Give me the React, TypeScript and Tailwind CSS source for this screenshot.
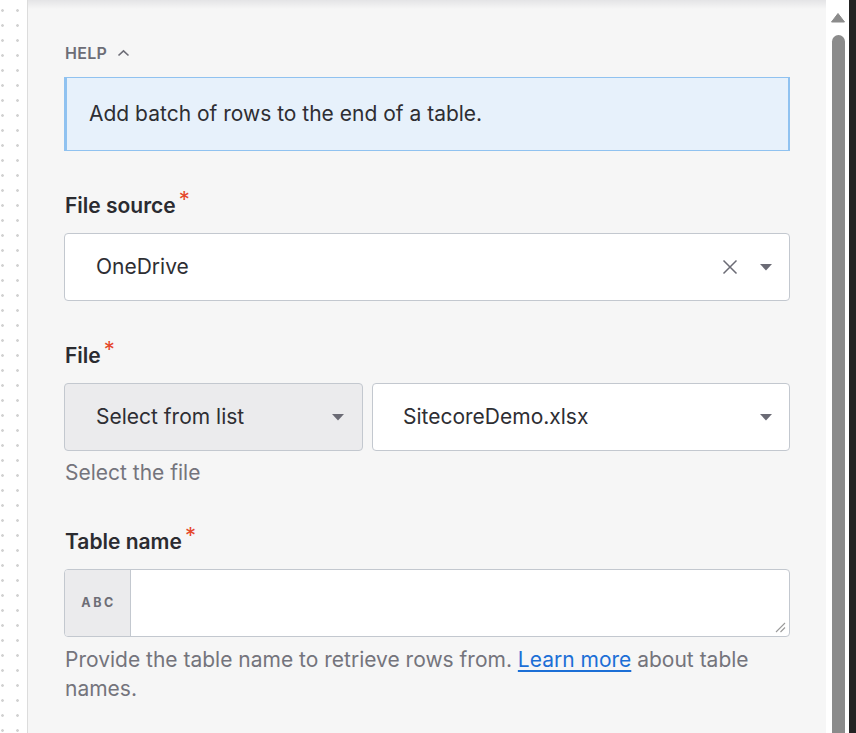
const Caret = ({ className = "" }: { className?: string }) => (
  <svg width="12" height="7" viewBox="0 0 12 7" className={className}>
    <path d="M0 0 L12 0 L6 6.5 Z" fill="#6b6b75" />
  </svg>
);

const Required = () => <span className="text-[#e5472b] text-[22px] leading-none relative -top-[6px] ml-[3px] font-normal">*</span>;

const Label = ({ text }: { text: string }) => (
  <div className="text-[21px] font-semibold text-[#2b2b30] leading-[24px] flex items-start">
    {text}
    <Required />
  </div>
);

const App = () => {
  return (
    <div className="w-[856px] h-[733px] flex overflow-hidden bg-white" style={{ fontFamily: "Inter, 'Noto Sans', sans-serif" }}>
      <div className="w-[28px] h-full border-r border-[#dcdcdc] bg-white bg-[radial-gradient(circle,#d2d2d2_1.1px,transparent_1.6px)] bg-[length:15px_15px] bg-[position:-5px_3px]" />

      <div className="relative flex-1 h-full bg-[#f6f6f6] px-[36px] pt-[43px]">
        <div className="absolute top-0 left-0 right-0 h-[9px] bg-gradient-to-b from-[#e4e4e6] to-[#f6f6f6]" />

        <div className="flex items-center gap-[10px] text-[16px] font-semibold text-[#6d6d76] leading-[20px] tracking-[0.3px] pl-[1px]">
          HELP
          <svg width="13" height="8" viewBox="0 0 13 8" fill="none">
            <path d="M1.5 6.5 L6.5 1.8 L11.5 6.5" stroke="#6d6d76" strokeWidth="1.6" />
          </svg>
        </div>

        <div className="mt-[14px] h-[74px] bg-[#e7f1fb] border border-[#90c2f0] border-l-[3px] border-r-2 flex items-center pl-[22px] text-[21px] text-[#2e2e33]">
          Add batch of rows to the end of a table.
        </div>

        <div className="mt-[43px] pl-[1px]">
          <Label text="File source" />
        </div>
        <div className="mt-[15px] h-[68px] bg-white border border-[#c3c8cf] rounded-[4px] flex items-center pl-[31px] pr-[17px] text-[21px] text-[#2e2e33]">
          <span className="flex-1">OneDrive</span>
          <svg width="16" height="16" viewBox="0 0 16 16" className="mr-[22px]">
            <path d="M1.5 1.5 L14.5 14.5 M14.5 1.5 L1.5 14.5" stroke="#6b6b75" strokeWidth="1.5" />
          </svg>
          <Caret />
        </div>

        <div className="mt-[43px] pl-[1px]">
          <Label text="File" />
        </div>
        <div className="mt-[15px] flex gap-[9px]">
          <div className="w-[299px] h-[68px] bg-[#ebebed] border border-[#c3c8cf] rounded-[4px] flex items-center pl-[31px] pr-[18px] text-[21px] text-[#2e2e33]">
            <span className="flex-1">Select from list</span>
            <Caret />
          </div>
          <div className="flex-1 h-[68px] bg-white border border-[#c3c8cf] rounded-[4px] flex items-center pl-[30px] pr-[17px] text-[21px] text-[#2e2e33]">
            <span className="flex-1">SitecoreDemo.xlsx</span>
            <Caret />
          </div>
        </div>
        <div className="mt-[10px] pl-[1px] text-[21px] leading-[24px] text-[#74747c]">Select the file</div>

        <div className="mt-[45px] pl-[1px]">
          <Label text="Table name" />
        </div>
        <div className="mt-[15px] h-[68px] bg-white border border-[#c3c8cf] rounded-[4px] flex relative overflow-hidden">
          <div className="w-[66px] h-full bg-[#ebebed] border-r border-[#c3c8cf] flex items-center justify-center text-[12.5px] font-bold tracking-[2.5px] text-[#6d6d76] pl-[2px]">
            ABC
          </div>
          <svg width="12" height="12" viewBox="0 0 12 12" className="absolute right-[3px] bottom-[3px]">
            <path d="M11 2 L2 11 M11 6.5 L6.5 11" stroke="#9a9a9a" strokeWidth="1.1" />
          </svg>
        </div>
        <div className="mt-[8px] pl-[1px] text-[21px] leading-[29px] text-[#74747c]">
          Provide the table name to retrieve rows from.{" "}
          <span className="text-[#1c6fd6] underline underline-offset-[3px]">Learn more</span> about table names.
        </div>
      </div>

      <div className="w-[23px] h-full bg-white flex flex-col items-center pt-[13px] pl-[1px]">
        <svg width="14" height="10" viewBox="0 0 14 10">
          <path d="M7 0.5 L13.5 9 L0.5 9 Z" fill="#8b8b8b" strokeLinejoin="round" stroke="#8b8b8b" strokeWidth="1" />
        </svg>
        <div className="mt-[12px] w-[13px] flex-1 bg-[#8b8b8b] rounded-t-full" />
      </div>
      <div className="w-[7px] h-full bg-[#232323]" />
    </div>
  );
};

export default App;
